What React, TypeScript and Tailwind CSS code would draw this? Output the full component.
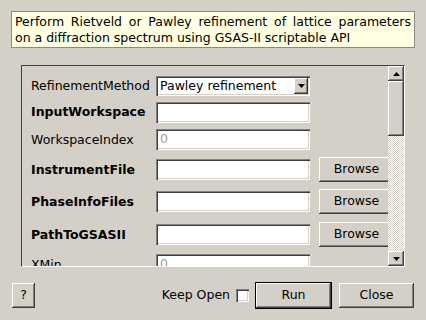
import type { ReactNode } from "react";

const raised =
  "bg-[#d4d0c8] shadow-[inset_-1px_-1px_0_#404040,inset_1px_1px_0_#ffffff,inset_-2px_-2px_0_#808080]";
const sunken =
  "bg-white shadow-[inset_1px_1px_0_#808080,inset_2px_2px_0_#404040,inset_-1px_-1px_0_#ffffff,inset_-2px_-2px_0_#d4d0c8]";

const rows: { label: string; bold?: boolean; kind: "combo" | "input" | "file"; value?: string; disabled?: boolean; h: string }[] = [
  { label: "RefinementMethod", kind: "combo", value: "Pawley refinement", h: "h-[26px]" },
  { label: "InputWorkspace", bold: true, kind: "input", h: "h-[26px]" },
  { label: "WorkspaceIndex", kind: "input", value: "0", disabled: true, h: "h-[29px]" },
  { label: "InstrumentFile", bold: true, kind: "file", h: "h-[31px]" },
  { label: "PhaseInfoFiles", bold: true, kind: "file", h: "h-[33px]" },
  { label: "PathToGSASII", bold: true, kind: "file", h: "h-[33px]" },
  { label: "XMin", kind: "input", value: "0", disabled: true, h: "h-[27px]" },
];

function Arrow({ up }: { up?: boolean }) {
  return (
    <svg width="7" height="4" viewBox="0 0 7 4">
      <polygon points={up ? "3.5,0 7,4 0,4" : "0,0 7,0 3.5,4"} fill="#000" />
    </svg>
  );
}

function Btn({ children, className }: { children: ReactNode; className: string }) {
  return <div className={`flex shrink-0 items-center justify-center ${raised} ${className}`}>{children}</div>;
}

export default function App() {
  return (
    <div className="flex h-[320px] w-[426px] flex-col bg-[#d4d0c8] font-['DejaVu_Sans',sans-serif] text-[12.5px] text-black">
      {/* description */}
      <div className="mx-[11px] mt-[11px] h-[37px] border border-[#8a8a8a] bg-[#ffffe1] px-[3px] pt-[2px] text-justify leading-[16px]">
        Perform Rietveld or Pawley refinement of lattice parameters on a diffraction spectrum using GSAS-II scriptable API
      </div>

      {/* property frame */}
      <div className="ml-[21px] mt-[17px] flex h-[202px] w-[384px] border border-t-[#404040] border-l-[#404040] border-b-white border-r-white">
        <div className="flex-1 overflow-hidden pl-[9px] pt-[7px]">
          {rows.map((r) => (
            <div key={r.label} className={`flex items-center ${r.h}`}>
              <div className={`w-[125px] shrink-0 whitespace-nowrap pt-[1px] ${r.bold ? "font-bold" : ""}`}>{r.label}</div>
              {r.kind === "combo" ? (
                <div className={`relative flex h-[20px] w-[154px] shrink-0 items-center pl-[4px] ${sunken}`}>
                  {r.value}
                  <Btn className="absolute right-[2px] top-[2px] h-[16px] w-[14px]">
                    <Arrow />
                  </Btn>
                </div>
              ) : (
                <div className={`flex h-[21px] w-[154px] shrink-0 items-center pl-[4px] ${sunken} ${r.disabled ? "text-[#a0a0a0]" : ""}`}>
                  {r.value}
                </div>
              )}
              {r.kind === "file" && <Btn className="ml-[9px] h-[25px] w-[75px]">Browse</Btn>}
            </div>
          ))}
        </div>
        {/* scrollbar */}
        <div className="flex w-[16px] shrink-0 flex-col">
          <Btn className="h-[15px]">
            <Arrow up />
          </Btn>
          <div className={`h-[55px] shrink-0 ${raised}`} />
          <div className="flex-1 bg-[repeating-conic-gradient(#ffffff_0_25%,#d4d0c8_0_50%)] bg-[length:2px_2px]" />
          <Btn className="h-[15px]">
            <Arrow />
          </Btn>
        </div>
      </div>

      {/* bottom buttons */}
      <div className="mt-[15px] flex items-center pl-[12px] pr-[12px]">
        <Btn className="h-[25px] w-[23px]">?</Btn>
        <div className="ml-auto whitespace-nowrap">Keep Open</div>
        <div className={`ml-[6px] h-[13px] w-[13px] ${sunken}`} />
        <div className="ml-[6px] border border-black">
          <Btn className="h-[25px] w-[75px]">Run</Btn>
        </div>
        <Btn className="ml-[7px] h-[25px] w-[75px]">Close</Btn>
      </div>
    </div>
  );
}
